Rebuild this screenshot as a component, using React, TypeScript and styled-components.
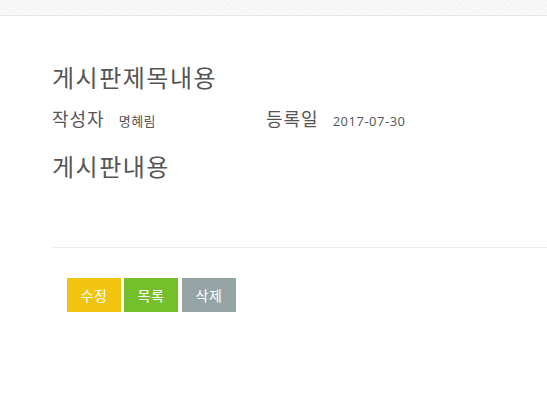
import React from "react";
import styled, { createGlobalStyle } from "styled-components";

const Global = createGlobalStyle`
  html, body { margin: 0; padding: 0; background: #fff; }
  body { font-family: "Open Sans", "Noto Sans CJK KR", sans-serif; color: #555; }
  * { box-sizing: border-box; }
`;

const Header = styled.div`
  height: 16px;
  background-color: #f8f8f8;
  background-image: repeating-linear-gradient(45deg, rgba(0,0,0,0.012) 0 2px, transparent 2px 4px);
  border-bottom: 1px solid #e6e6e6;
`;

const Main = styled.div`
  padding: 44px 0 0 52px;
`;

const Title = styled.h2`
  margin: 0;
  font-family: "Noto Sans CJK KR", sans-serif;
  font-weight: 400;
  font-size: 24px;
  line-height: 34px;
  letter-spacing: 1.5px;
  color: #555;
`;

const MetaRow = styled.div`
  display: flex;
  align-items: baseline;
  margin-top: 11px;
  height: 30px;
`;

const MetaItem = styled.div<{ $w?: number }>`
  display: flex;
  align-items: baseline;
  width: ${(p) => (p.$w ? `${p.$w}px` : "auto")};
`;

const MetaLabel = styled.span`
  font-family: "Noto Sans CJK KR", sans-serif;
  font-size: 18px;
  letter-spacing: 1px;
  color: #555;
  margin-right: 14px;
`;

const MetaValue = styled.span`
  font-family: "Open Sans", "Noto Sans CJK KR", sans-serif;
  font-size: 13px;
  letter-spacing: 0.5px;
  color: #555;
`;

const Content = styled(Title)`
  margin-top: 14px;
`;

const Divider = styled.hr`
  margin: 64px 0 0 0;
  border: 0;
  border-top: 1px solid #ececec;
`;

const Buttons = styled.div`
  display: flex;
  gap: 3px;
  padding: 30px 0 0 15px;
`;

const Btn = styled.button<{ $bg: string; $gapFix?: boolean }>`
  width: 54px;
  height: 34px;
  border: 0;
  padding: 0;
  margin-left: ${(p) => (p.$gapFix ? "1px" : "0")};
  background: ${(p) => p.$bg};
  color: #fff;
  font-family: "Noto Sans CJK KR", sans-serif;
  font-size: 14px;
  letter-spacing: 0.5px;
  cursor: pointer;
`;

export default function App() {
  return (
    <>
      <Global />
      <Header />
      <Main>
        <Title>게시판제목내용</Title>
        <MetaRow>
          <MetaItem $w={214}>
            <MetaLabel>작성자</MetaLabel>
            <MetaValue>명혜림</MetaValue>
          </MetaItem>
          <MetaItem>
            <MetaLabel>등록일</MetaLabel>
            <MetaValue>2017-07-30</MetaValue>
          </MetaItem>
        </MetaRow>
        <Content>게시판내용</Content>
        <Divider />
        <Buttons>
          <Btn $bg="#f1c40f">수정</Btn>
          <Btn $bg="#73c02c">목록</Btn>
          <Btn $bg="#95a5a6" $gapFix>삭제</Btn>
        </Buttons>
      </Main>
    </>
  );
}
